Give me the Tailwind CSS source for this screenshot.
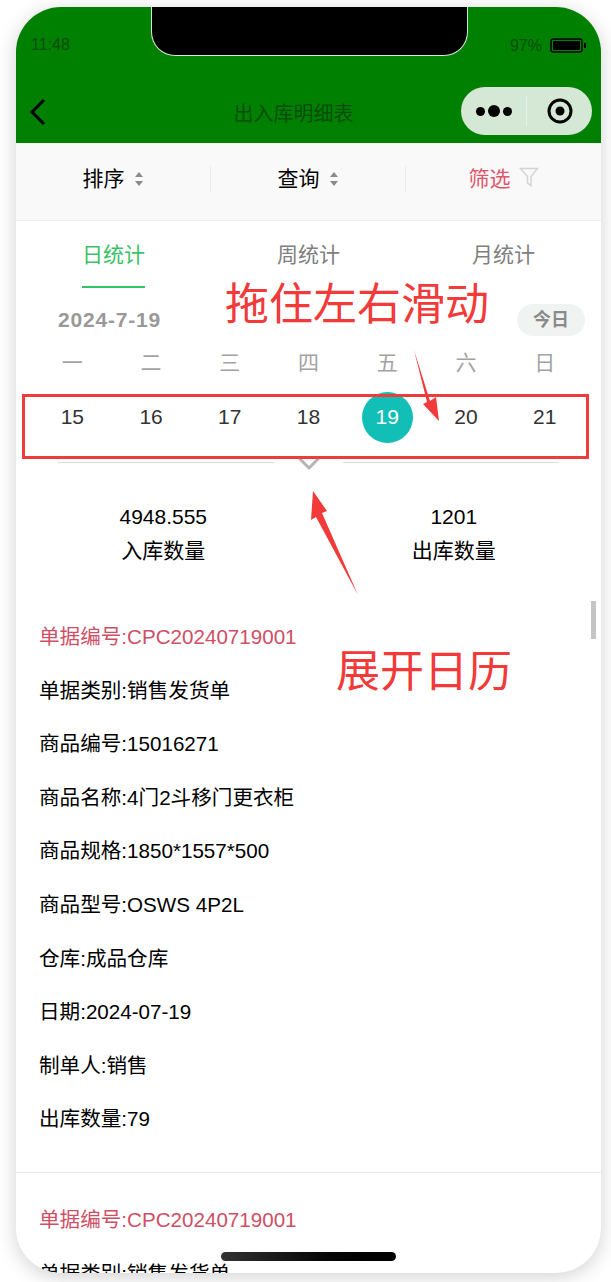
<!DOCTYPE html>
<html lang="zh">
<head>
  <meta charset="UTF-8">
  <meta name="viewport" content="width=device-width, initial-scale=1.0">
  <title>出入库明细表</title>
  <script src="https://cdn.jsdelivr.net/npm/@tailwindcss/browser@4"></script>
</head>
<body class="bg-white w-[611px] h-[1282px] overflow-hidden font-['Liberation_Sans','Noto_Sans_CJK_SC',sans-serif]">
  <div class="relative ml-[16px] mt-[7px] w-[585px] h-[1266px] rounded-[45px] overflow-hidden bg-white shadow-[0_4px_20px_rgba(0,0,0,0.18)]">

    <!-- header -->
    <div class="relative h-[136px] bg-[#008000]">
      <div class="flex justify-between items-center pl-[15px] pr-[14px] pt-[27px] text-[#0a4d0a]">
        <span class="text-[16px] leading-[18px]">11:48</span>
        <div class="flex items-center gap-[8px] mt-[3px]">
          <span class="text-[16px] leading-[18px]">97%</span>
          <svg width="37" height="16" viewBox="0 0 37 16">
            <rect x="1" y="1" width="31" height="13" rx="2.5" fill="none" stroke="#000" stroke-width="1.5"/>
            <rect x="3" y="3" width="27" height="9" rx="1" fill="#000"/>
            <rect x="34" y="5" width="2" height="5" fill="#000"/>
          </svg>
        </div>
      </div>
      <div class="absolute left-[135px] top-0 w-[317px] h-[49px] bg-black border border-t-0 border-[#d6e6d6] rounded-b-[24px]"></div>
      <div class="flex items-center mt-[32px] pl-[12px] pr-[9px]">
        <svg width="20" height="30" viewBox="0 0 20 30" class="mt-[2px]">
          <path d="M16 3 L4 15 L16 27" fill="none" stroke="#000" stroke-width="3"/>
        </svg>
        <div class="flex-1 text-center text-[20px] leading-[26px] text-[#0a4d0a] pl-[78px] mt-[6px]">出入库明细表</div>
        <div class="flex items-center w-[131px] h-[48px] rounded-full bg-[#d5e8d5]">
          <div class="flex items-center justify-center gap-[3px] w-[66px] border-r border-[#e8f2e8] h-[30px]">
            <span class="w-[9px] h-[9px] rounded-full bg-black"></span>
            <span class="w-[12px] h-[12px] rounded-full bg-black"></span>
            <span class="w-[9px] h-[9px] rounded-full bg-black"></span>
          </div>
          <div class="flex-1 flex justify-center">
            <svg width="26" height="26" viewBox="0 0 26 26">
              <circle cx="13" cy="13" r="11" fill="none" stroke="#000" stroke-width="3"/>
              <circle cx="13" cy="13" r="4.5" fill="#000"/>
            </svg>
          </div>
        </div>
      </div>
    </div>

    <!-- filter bar -->
    <div class="flex h-[78px] pb-[8px] bg-[#f9f9f9] border-b border-[#eeeeee] items-center">
      <div class="w-[195px] h-[26px] mt-[2px] flex items-center justify-center gap-[9px] border-r border-[#ececec] text-[21px] text-black">
        排序
        <svg width="10" height="16" viewBox="0 0 10 16"><path d="M5 1 L9 6 H1 Z M5 15 L9 10 H1 Z" fill="#8a8a8a"/></svg>
      </div>
      <div class="w-[195px] h-[26px] mt-[2px] flex items-center justify-center gap-[9px] border-r border-[#ececec] text-[21px] text-black">
        查询
        <svg width="10" height="16" viewBox="0 0 10 16"><path d="M5 1 L9 6 H1 Z M5 15 L9 10 H1 Z" fill="#8a8a8a"/></svg>
      </div>
      <div class="w-[195px] h-[26px] mt-[2px] flex items-center justify-center gap-[8px] text-[21px] text-[#e0556a]">
        筛选
        <svg width="20" height="20" viewBox="0 0 20 20" class="mb-[4px]"><path d="M1.5 1.5 H18.5 L12 9.5 V18.5 L8.5 16 V9.5 Z" fill="none" stroke="#d4d4d4" stroke-width="1.5"/></svg>
      </div>
    </div>

    <!-- tabs -->
    <div class="flex h-[67px]">
      <div class="w-[195px] flex flex-col items-center pt-[22px]">
        <span class="text-[21px] leading-[24px] text-[#3cc168]">日统计</span>
        <span class="w-[63px] h-[3px] bg-[#34c465] mt-[19px]"></span>
      </div>
      <div class="w-[195px] text-center pt-[22px] text-[21px] leading-[24px] text-[#808080]">周统计</div>
      <div class="w-[195px] text-center pt-[22px] text-[21px] leading-[24px] text-[#808080]">月统计</div>
    </div>

    <!-- date row -->
    <div class="flex justify-between items-center h-[38px] mt-[13px] pl-[42px] pr-[16px]">
      <span class="text-[21px] font-bold text-[#999999] tracking-[0.8px]">2024-7-19</span>
      <span class="w-[68px] h-[32px] rounded-full bg-[#f1f3f3] text-[18px] font-bold leading-[32px] text-center text-[#8a8a8a]">今日</span>
    </div>

    <!-- calendar -->
    <div class="grid grid-cols-7 px-[17px] mt-[6px] text-center">
      <span class="text-[21px] leading-[36px] text-[#a3a3a3]">一</span>
      <span class="text-[21px] leading-[36px] text-[#a3a3a3]">二</span>
      <span class="text-[21px] leading-[36px] text-[#a3a3a3]">三</span>
      <span class="text-[21px] leading-[36px] text-[#a3a3a3]">四</span>
      <span class="text-[21px] leading-[36px] text-[#a3a3a3]">五</span>
      <span class="text-[21px] leading-[36px] text-[#a3a3a3]">六</span>
      <span class="text-[21px] leading-[36px] text-[#a3a3a3]">日</span>
    </div>
    <div class="grid grid-cols-7 px-[17px] mt-[11px] h-[50px] text-center text-[21px] leading-[50px] text-[#333333]">
      <span>15</span>
      <span>16</span>
      <span>17</span>
      <span>18</span>
      <span class="w-[51px] h-[51px] mx-auto rounded-full bg-[#12bfb7] text-white">19</span>
      <span>20</span>
      <span>21</span>
    </div>

    <!-- expand -->
    <div class="flex items-center px-[42px] mt-[13px] h-[16px]">
      <span class="w-[216px] h-px bg-[#dddddd] mb-[2px]"></span>
      <span class="flex-1 flex justify-center">
        <svg width="24" height="16" viewBox="0 0 24 16"><path d="M2 3 L12 13 L22 3" fill="none" stroke="#b5b5b5" stroke-width="3"/></svg>
      </span>
      <span class="w-[216px] h-px bg-[#dddddd] mb-[2px]"></span>
    </div>

    <!-- totals -->
    <div class="grid grid-cols-2 px-[2px] mt-[29px] text-center text-[21px] leading-[34px] text-black">
      <div><div>4948.555</div><div>入库数量</div></div>
      <div class="pl-[0px]"><div>1201</div><div>出库数量</div></div>
    </div>

    <!-- list -->
    <div class="mt-[42px] px-[23px] text-[20.6px] text-black">
      <div class="leading-[53.6px] text-[#cf4f66]">单据编号:CPC20240719001</div>
      <div class="leading-[53.6px]">单据类别:销售发货单</div>
      <div class="leading-[53.6px]">商品编号:15016271</div>
      <div class="leading-[53.6px]">商品名称:4门2斗移门更衣柜</div>
      <div class="leading-[53.6px]">商品规格:1850*1557*500</div>
      <div class="leading-[53.6px]">商品型号:OSWS 4P2L</div>
      <div class="leading-[53.6px]">仓库:成品仓库</div>
      <div class="leading-[53.6px]">日期:2024-07-19</div>
      <div class="leading-[53.6px]">制单人:销售</div>
      <div class="leading-[53.6px]">出库数量:79</div>
    </div>
    <div class="h-px bg-[#e8e8e8] mt-[26px]"></div>
    <div class="mt-[20px] px-[23px] text-[20.6px] text-black">
      <div class="leading-[53.6px] text-[#cf4f66]">单据编号:CPC20240719001</div>
      <div class="leading-[53.6px]">单据类别:销售发货单</div>
    </div>

    <!-- scrollbar, home bar -->
    <div class="absolute left-[575px] top-[594px] w-[5px] h-[38px] bg-[#c4c4c4]"></div>
    <div class="absolute left-[205px] top-[1245px] w-[175px] h-[9px] rounded-full bg-gradient-to-r from-[#333333] to-black"></div>

    <!-- red annotations drawn on the screenshot -->
    <div class="absolute left-[6px] top-[387px] w-[567px] h-[65px] border-[3px] border-[#ee3b3b]"></div>
    <div class="absolute left-[209px] top-[270px] text-[44px] leading-[56px] whitespace-nowrap text-[#f23a3a]">拖住左右滑动</div>
    <div class="absolute left-[320px] top-[637px] text-[44px] leading-[56px] whitespace-nowrap text-[#f23a3a]">展开日历</div>
    <svg class="absolute left-[390px] top-[340px]" width="40" height="80" viewBox="0 0 40 80">
      <path d="M8 3 L24 54 L30 50 L33 74 L17 57 L21 55 Z" fill="#f23a3a"/>
    </svg>
    <svg class="absolute left-[290px] top-[480px]" width="60" height="112" viewBox="0 0 60 112">
      <path d="M7 4 L21 24 L16 26 L52 108 L10 30 L5 33 Z" fill="#f23a3a"/>
    </svg>
  </div>
</body>
</html>
